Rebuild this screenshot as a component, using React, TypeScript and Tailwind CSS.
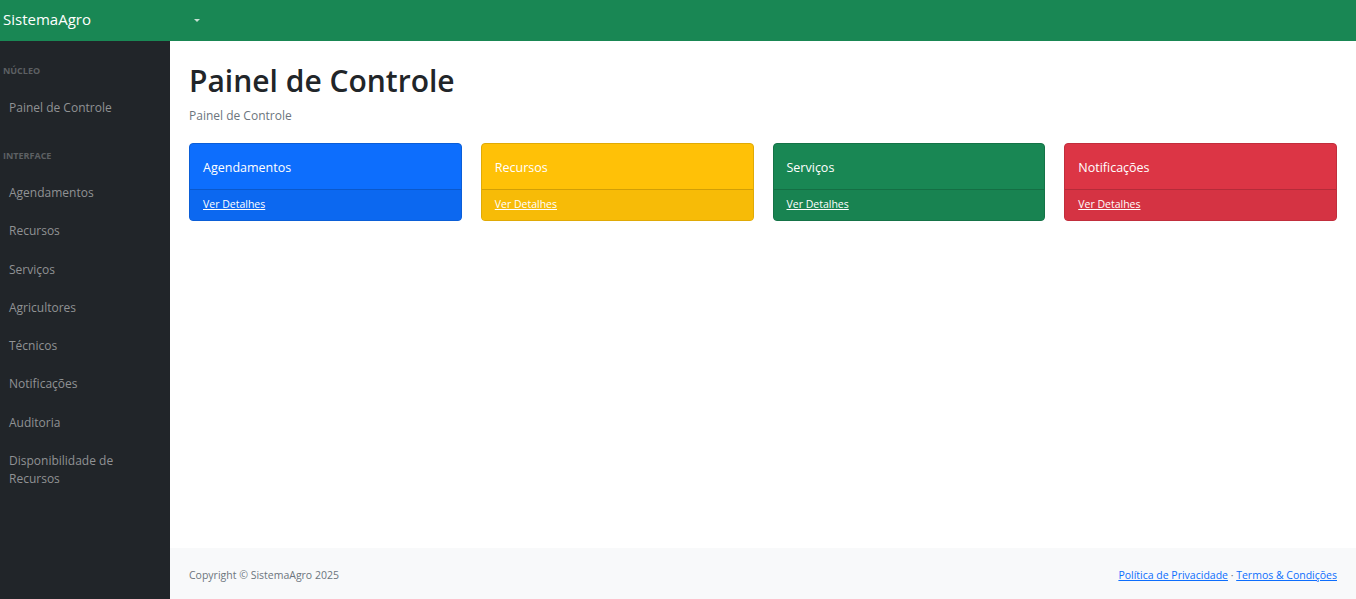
const navItems = [
  'Agendamentos',
  'Recursos',
  'Serviços',
  'Agricultores',
  'Técnicos',
  'Notificações',
  'Auditoria',
  'Disponibilidade de Recursos',
]

const cards = [
  { title: 'Agendamentos', body: 'bg-[#0d6efd] border-[#0b5ed7]', foot: 'bg-[#0c68f0]' },
  { title: 'Recursos', body: 'bg-[#ffc107] border-[#e0aa06]', foot: 'bg-[#f7bb07]' },
  { title: 'Serviços', body: 'bg-[#198754] border-[#157347]', foot: 'bg-[#188351]' },
  { title: 'Notificações', body: 'bg-[#dc3545] border-[#c12e3c]', foot: 'bg-[#d53343]' },
]

const App = () => {
  return (
    <div className="flex flex-col h-[599px] text-[12px] font-['Open_Sans',sans-serif]">
      {/* top nav */}
      <nav className="flex items-center h-[41px] bg-[#198754] shrink-0">
        <a className="w-[170px] pl-[3px] mb-[3px] text-[15px] text-white">SistemaAgro</a>
        <span className="ml-[24px] border-x-[3px] border-t-[3px] border-x-transparent border-t-[#c8e0d4]" />
      </nav>

      <div className="flex flex-1 min-h-0">
        {/* sidebar */}
        <aside className="w-[170px] shrink-0 bg-[#212529] pt-[18px]">
          <div className="pl-[3px] mb-[7px] text-[9px] font-bold uppercase text-[#5d6063] h-[24px] leading-[24px]">Núcleo</div>
          <a className="block pl-[9px] pr-2 py-[9px] leading-[18px] text-[#909294]">Painel de Controle</a>
          <div className="pl-[3px] mt-[18px] mb-[6px] text-[9px] font-bold uppercase text-[#5d6063] h-[24px] leading-[24px]">Interface</div>
          {navItems.map((item) => (
            <a key={item} className="block pl-[9px] pr-2 py-[10px] leading-[18.3px] text-[#909294]">
              {item}
            </a>
          ))}
        </aside>

        {/* main */}
        <div className="flex flex-col flex-1 min-w-0">
          <main className="flex-1 px-[19px]">
            <h1 className="mt-[22px] text-[30px] leading-[36px] font-semibold text-[#212529]">Painel de Controle</h1>
            <div className="mt-[8px] text-[#6c757d] leading-[18px]">Painel de Controle</div>
            <div className="mt-[18px] grid grid-cols-4 gap-[19px]">
              {cards.map((c) => (
                <div key={c.title} className={`rounded-[4px] border text-white overflow-hidden ${c.body}`}>
                  <div className="px-[13px] pt-[15px] pb-[12px] leading-[18px] text-[12.5px]">{c.title}</div>
                  <div className={`border-t border-black/15 px-[13px] h-[31px] flex items-center pb-[1px] ${c.foot}`}>
                    <a className="underline text-[10.5px]">Ver Detalhes</a>
                  </div>
                </div>
              ))}
            </div>
          </main>
          <footer className="h-[51px] bg-[#f8f9fa] flex items-center justify-between px-[19px] pt-[4px] text-[10.5px] shrink-0">
            <span className="text-[#6c757d]">Copyright © SistemaAgro 2025</span>
            <span className="text-[#6c757d]">
              <a className="underline text-[#0d6efd]">Política de Privacidade</a>
              {' · '}
              <a className="underline text-[#0d6efd]">Termos &amp; Condições</a>
            </span>
          </footer>
        </div>
      </div>
    </div>
  )
}

export default App
